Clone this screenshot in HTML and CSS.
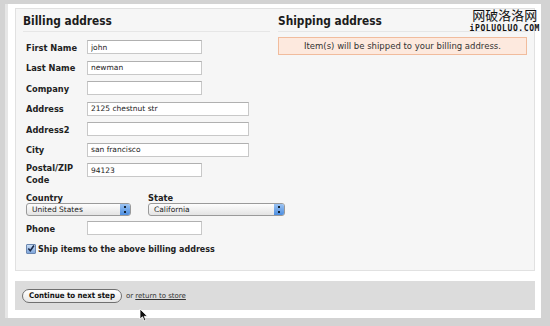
FILE: index.html
```html
<!DOCTYPE html>
<html lang="en">
<head>
    <meta charset="UTF-8">
    <title>Checkout - Address</title>
    <link rel="stylesheet" href="styles.css">
</head>
<body>
    <div class="frame">
        <div class="panel">
            <section class="billing">
                <h2>Billing address</h2>
                <div class="row"><label>First Name</label><input class="short" type="text" value="john"></div>
                <div class="row"><label>Last Name</label><input class="short" type="text" value="newman"></div>
                <div class="row"><label>Company</label><input class="short" type="text" value=""></div>
                <div class="row"><label>Address</label><input class="long" type="text" value="2125 chestnut str"></div>
                <div class="row"><label>Address2</label><input class="long" type="text" value=""></div>
                <div class="row"><label>City</label><input class="long" type="text" value="san francisco"></div>
                <div class="row tall"><label>Postal/ZIP Code</label><input class="short" type="text" value="94123"></div>
                <div class="selects">
                    <div class="pick country">
                        <label>Country</label>
                        <div class="select"><span>United States</span><i class="arrows"></i></div>
                    </div>
                    <div class="pick state">
                        <label>State</label>
                        <div class="select"><span>California</span><i class="arrows"></i></div>
                    </div>
                </div>
                <div class="row"><label>Phone</label><input class="short" type="text" value=""></div>
                <div class="check">
                    <span class="box">
                        <svg width="9" height="9" viewBox="0 0 9 9"><path d="M1.5 4.5 L3.7 7 L7.8 1.2" fill="none" stroke="#1a2a4a" stroke-width="1.8"/></svg>
                    </span>
                    Ship items to the above billing address
                </div>
            </section>
            <section class="shipping">
                <h2>Shipping address</h2>
                <p class="notice">Item(s) will be shipped to your billing address.</p>
            </section>
        </div>
        <div class="actions">
            <button type="button">Continue to next step</button>
            <span class="or">or <a href="#">return to store</a></span>
            <svg class="cursor" width="10" height="14" viewBox="0 0 10 14"><path d="M1 1 L1 11 L3.5 8.8 L5.3 12.8 L6.9 12.1 L5.2 8.3 L8.4 8.3 Z" fill="#111" stroke="#fff" stroke-width="0.8"/></svg>
        </div>
    </div>
    <div class="mark">
        <div class="cn">网破洛洛网</div>
        <div class="en">iPOLUOLUO.COM</div>
    </div>
</body>
</html>
```

FILE: styles.css
```css
body {
    margin: 0;
    background: #d3d3d3;
    font-family: "DejaVu Sans", Verdana, sans-serif;
    color: #222;
}
.frame {
    margin: 4px 9px 9px 8px;
    background: #fff;
    padding: 4px 6px 8px 7px;
    box-shadow: -3px 0 0 #e6e6e6;
}
.panel {
    display: grid;
    grid-template-columns: 255px 1fr;
    background: #f6f6f6;
    border: 1px solid #e1e1e1;
    padding: 5px 6px 10px 7px;
    height: 246px;
}
h2 {
    margin: 0 0 5px;
    font-family: "DejaVu Sans Condensed", "DejaVu Sans", sans-serif;
    font-size: 11.8px;
    font-weight: bold;
    line-height: 15px;
    color: #1c1c1c;
    padding-bottom: 2px;
    border-bottom: 1px solid #e6e6e6;
}
.billing h2 {
    margin-right: 8px;
}
.row {
    display: flex;
    align-items: center;
    height: 20.5px;
    padding-left: 3px;
}
label,
.check,
button {
    font-family: "DejaVu Sans Condensed", "DejaVu Sans", sans-serif;
}
.row label {
    width: 61px;
    font-size: 9.2px;
    font-weight: bold;
}
.row.tall {
    height: 33px;
    align-items: flex-start;
    padding-top: 3px;
    box-sizing: border-box;
}
.row.tall label {
    line-height: 12px;
    margin-top: -1px;
}
input {
    height: 14px;
    box-sizing: border-box;
    border: 1px solid #c8c8c8;
    border-top-color: #b0b0b0;
    background: #fff;
    font-family: "DejaVu Sans", sans-serif;
    font-size: 7.5px;
    padding: 0 3px;
    color: #222;
}
input.short {
    width: 115px;
}
input.long {
    width: 162px;
}
.selects {
    display: flex;
    gap: 17px;
    padding-left: 3px;
    margin-bottom: 2px;
}
.pick label {
    display: block;
    font-size: 9.2px;
    font-weight: bold;
    line-height: 10px;
}
.select {
    display: flex;
    align-items: center;
    height: 11px;
    border: 1px solid #9a9a9a;
    border-radius: 3px;
    background: linear-gradient(#fdfdfd, #e4e4e4);
    font-size: 7.5px;
    padding-left: 5px;
}
.select span {
    flex: 1;
}
.country .select {
    width: 98px;
}
.state .select {
    width: 130px;
}
.arrows {
    width: 10px;
    align-self: stretch;
    background: linear-gradient(#9cc3f2, #4d8ee0);
    border-radius: 0 2px 2px 0;
    position: relative;
}
.arrows::before,
.arrows::after {
    content: "";
    position: absolute;
    left: 4px;
    width: 2px;
    height: 2px;
    background: #123;
}
.arrows::before {
    top: 2px;
}
.arrows::after {
    bottom: 2px;
}
.check {
    display: flex;
    align-items: center;
    gap: 2px;
    padding-left: 3px;
    margin-top: 5px;
    font-size: 8.9px;
    font-weight: bold;
}
.box {
    width: 8px;
    height: 8px;
    border: 1px solid #6b87b0;
    border-radius: 1px;
    background: linear-gradient(#c9dcf4, #7fa6db);
    display: flex;
    align-items: center;
    justify-content: center;
}
.notice {
    margin: 0 1px 0 0;
    background: #fde9de;
    border: 1px solid #f1bc9d;
    font-size: 8.5px;
    text-align: center;
    padding: 3px 0;
    color: #333;
}
.actions {
    margin-top: 10px;
    background: #dcdcdc;
    height: 29px;
    display: flex;
    align-items: center;
    padding-left: 7px;
    position: relative;
}
button {
    height: 14px;
    padding: 0 6px;
    border: 1px solid #707070;
    border-radius: 7px;
    background: linear-gradient(#ffffff, #e6e6e6);
    font-size: 7.8px;
    font-weight: bold;
    color: #111;
    line-height: 12px;
}
.or {
    font-size: 7px;
    margin-left: 4px;
    color: #333;
}
.or a {
    color: #333;
}
.cursor {
    position: absolute;
    left: 124px;
    top: 27px;
}
.mark {
    position: absolute;
    right: 10px;
    top: 7px;
    text-align: center;
    color: #111;
}
.mark .cn {
    font-family: "Noto Sans CJK SC", sans-serif;
    font-size: 13px;
    line-height: 15px;
}
.mark .en {
    font-family: "DejaVu Sans Mono", monospace;
    font-size: 8px;
    line-height: 8px;
    font-weight: bold;
    letter-spacing: 0.6px;
    margin-top: 3px;
}
```
